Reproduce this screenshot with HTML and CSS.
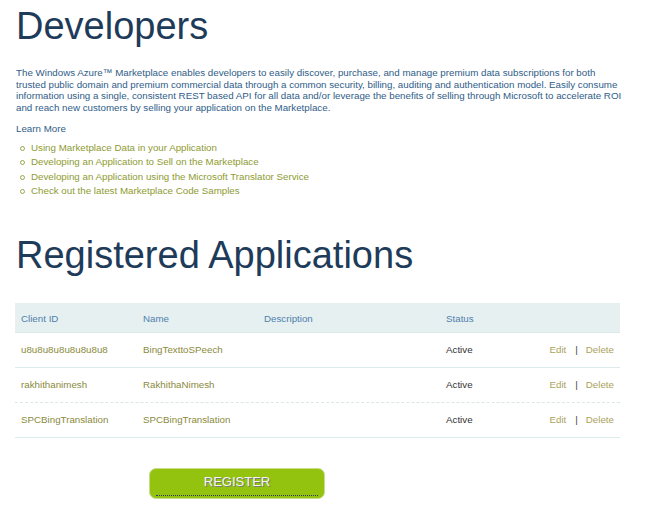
FILE: index.html
```html
<!DOCTYPE html>
<html>
<head>
<meta charset="utf-8">
<link rel="stylesheet" href="styles.css">
</head>
<body>
<div class="page">
  <h1 class="title">Developers</h1>
  <p class="intro">The Windows Azure™ Marketplace enables developers to easily discover, purchase, and manage premium data subscriptions for both trusted public domain and premium commercial data through a common security, billing, auditing and authentication model. Easily consume information using a single, consistent REST based API for all data and/or leverage the benefits of selling through Microsoft to accelerate ROI and reach new customers by selling your application on the Marketplace.</p>
  <div class="learn">Learn More</div>
  <ul class="links">
    <li><a href="#">Using Marketplace Data in your Application</a></li>
    <li><a href="#">Developing an Application to Sell on the Marketplace</a></li>
    <li><a href="#">Developing an Application using the Microsoft Translator Service</a></li>
    <li><a href="#">Check out the latest Marketplace Code Samples</a></li>
  </ul>
  <h1 class="title title2">Registered Applications</h1>
  <div class="table">
    <div class="row head">
      <div class="c1">Client ID</div>
      <div class="c2">Name</div>
      <div class="c3">Description</div>
      <div class="c4">Status</div>
      <div class="c5"></div>
    </div>
    <div class="row">
      <div class="c1 val">u8u8u8u8u8u8u8u8</div>
      <div class="c2 val">BingTexttoSPeech</div>
      <div class="c3"></div>
      <div class="c4 status">Active</div>
      <div class="c5 actions"><a href="#">Edit</a><span class="sep">|</span><a href="#">Delete</a></div>
    </div>
    <div class="row dashed">
      <div class="c1 val">rakhithanimesh</div>
      <div class="c2 val">RakhithaNimesh</div>
      <div class="c3"></div>
      <div class="c4 status">Active</div>
      <div class="c5 actions"><a href="#">Edit</a><span class="sep">|</span><a href="#">Delete</a></div>
    </div>
    <div class="row">
      <div class="c1 val">SPCBingTranslation</div>
      <div class="c2 val">SPCBingTranslation</div>
      <div class="c3"></div>
      <div class="c4 status">Active</div>
      <div class="c5 actions"><a href="#">Edit</a><span class="sep">|</span><a href="#">Delete</a></div>
    </div>
  </div>
  <div class="btnwrap">
    <button class="register">REGISTER</button>
  </div>
</div>
</body>
</html>
```

FILE: styles.css
```css
html, body {
  margin: 0;
  padding: 0;
  background: #ffffff;
}
body {
  font-family: "Liberation Sans", Arial, sans-serif;
  color: #2f5d88;
}
.page {
  padding: 0 30px 0 15px;
}
.title {
  margin: 0;
  padding: 4px 0 0 1px;
  font-weight: normal;
  font-size: 38px;
  line-height: 44px;
  color: #1e3b5a;
}
.intro {
  width: 608px;
  margin: 19px 0 0 1px;
  font-size: 9.75px;
  line-height: 11.7px;
  color: #2f5d88;
}
.learn {
  margin: 9px 0 0 1px;
  font-size: 9.75px;
  line-height: 12px;
  color: #2f5d88;
}
.links {
  list-style: none;
  margin: 6px 0 0 0;
  padding: 0 0 0 5px;
}
.links li {
  font-size: 9.75px;
  line-height: 14.5px;
  display: flex;
  align-items: center;
}
.links li::before {
  content: "";
  width: 3px;
  height: 3px;
  border: 1px solid #9aa84a;
  border-radius: 50%;
  margin-right: 6px;
}
.links a {
  color: #8e9b32;
  text-decoration: none;
}
.title2 {
  margin-top: 30px;
}
.table {
  margin-top: 26px;
  width: 605px;
  font-size: 9.75px;
}
.row {
  display: flex;
  align-items: center;
  height: 34px;
  border-bottom: 1px solid #dcecec;
}
.row.dashed {
  border-bottom: 1px dashed #dde6e6;
}
.row.head {
  height: 27px;
  border-top: 2px dotted #e6f0f0;
  border-bottom: 1px solid #d8eaea;
  background-color: #f9fcfc;
  background-image: radial-gradient(circle at 1px 1px, #e6f0f0 0.8px, transparent 1px);
  background-size: 2px 2px;
  color: #4f7fae;
}
.row > div {
  padding-left: 6px;
  white-space: nowrap;
}
.c1 { width: 116px; }
.c2 { width: 115px; }
.c3 { width: 176px; }
.c4 { width: 97px; }
.c5 { flex: 1; }
.val { color: #8a8a3c; }
.status { color: #333333; }
.actions {
  display: flex;
  justify-content: flex-end;
  padding-right: 6px;
}
.actions a {
  color: #aaa35c;
  text-decoration: none;
}
.sep {
  color: #444444;
  margin: 0 8px 0 9px;
}
.btnwrap {
  padding: 30px 0 0 134px;
}
.register {
  position: relative;
  display: block;
  width: 176px;
  height: 31px;
  border: 1px solid #c9dc8a;
  border-radius: 7px;
  background: #93c30f;
  color: #f4f4f4;
  font-family: "Liberation Sans", Arial, sans-serif;
  font-size: 13px;
  text-shadow: 1px 1px 0 #7a7a7a;
  padding: 0 0 3px 0;
  cursor: pointer;
}
.register::after {
  content: "";
  position: absolute;
  left: 6px;
  right: 6px;
  bottom: 2px;
  border-bottom: 1px dotted #2b3a6a;
}
```
